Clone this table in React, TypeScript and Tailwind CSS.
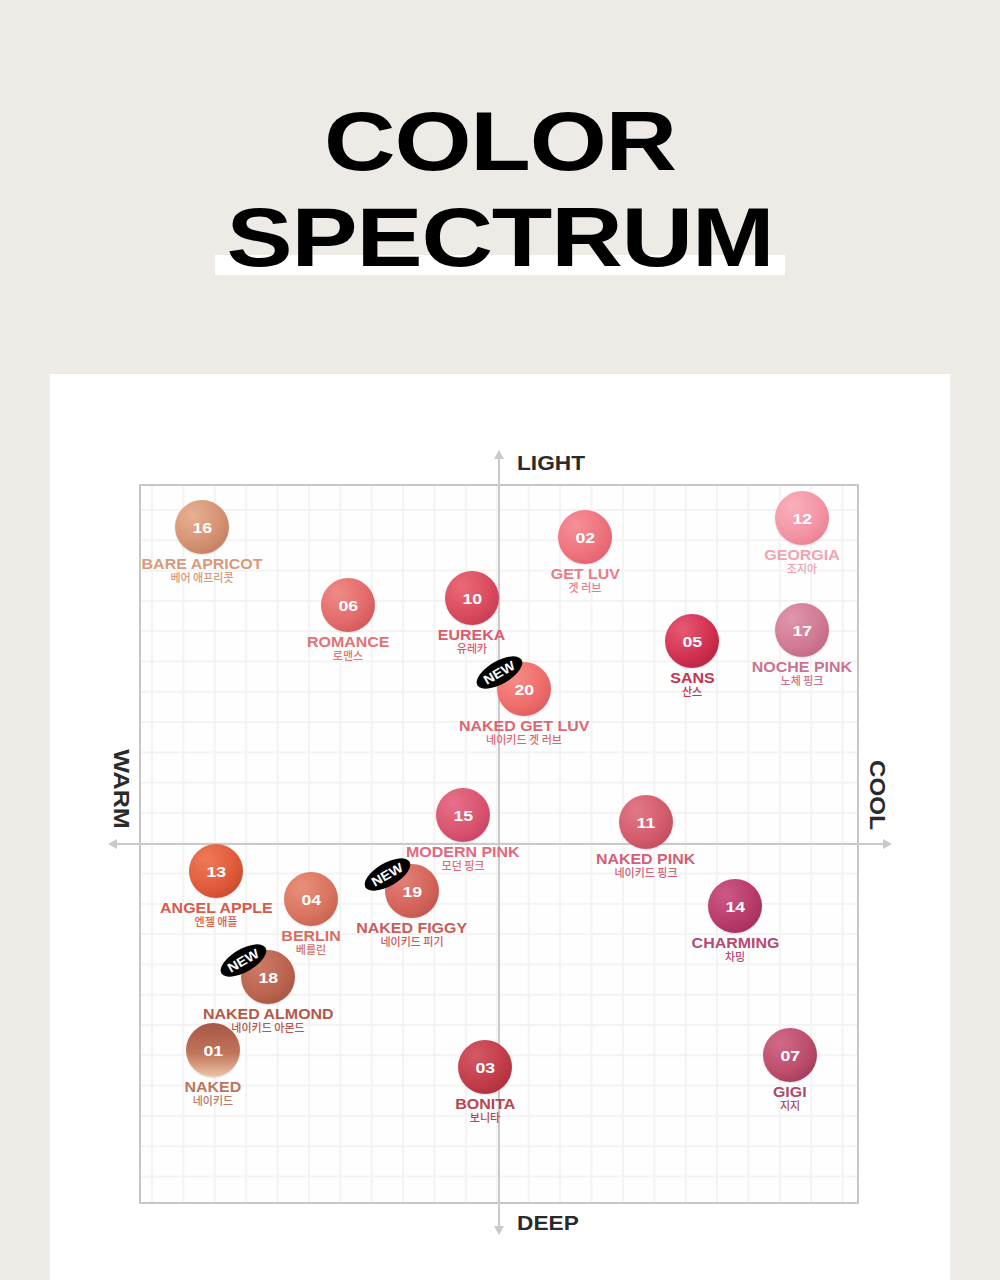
type Shade = {
  no: string
  en: string
  ko: string
  x: number
  y: number
  light: string
  base: string
  dark: string
  label: string
  isNew?: boolean
}

// x / y are circle centres measured from the chart frame's top-left corner
const shades: Shade[] = [
  { no: '16', en: 'BARE APRICOT', ko: '베어 애프리콧', x: 63, y: 43, light: '#e8b094', base: '#d49172', dark: '#b97257', label: '#d9997b' },
  { no: '06', en: 'ROMANCE', ko: '로맨스', x: 209, y: 121, light: '#f08a84', base: '#e36a6a', dark: '#c24a50', label: '#e07474' },
  { no: '10', en: 'EUREKA', ko: '유레카', x: 333, y: 114, light: '#ea6a78', base: '#da4a5e', dark: '#b8344a', label: '#dd5a6e' },
  { no: '02', en: 'GET LUV', ko: '겟 러브', x: 446, y: 53, light: '#f6909a', base: '#ee717b', dark: '#d8586a', label: '#ec7c88' },
  { no: '12', en: 'GEORGIA', ko: '조지아', x: 663, y: 34, light: '#f9b0bc', base: '#f394a4', dark: '#de7488', label: '#f0a3b3' },
  { no: '05', en: 'SANS', ko: '산스', x: 553, y: 157, light: '#e85a74', base: '#d03050', dark: '#a81c3a', label: '#c8304f' },
  { no: '17', en: 'NOCHE PINK', ko: '노체 핑크', x: 663, y: 146, light: '#e096aa', base: '#d07993', dark: '#b85e7a', label: '#c9738c' },
  { no: '20', en: 'NAKED GET LUV', ko: '네이키드 겟 러브', x: 385, y: 205, light: '#f88c88', base: '#ee6d6b', dark: '#d05256', label: '#dd6670', isNew: true },
  { no: '15', en: 'MODERN PINK', ko: '모던 핑크', x: 324, y: 331, light: '#e8708a', base: '#d9536f', dark: '#bb3e5a', label: '#e06a80' },
  { no: '11', en: 'NAKED PINK', ko: '네이키드 핑크', x: 507, y: 338, light: '#e27886', base: '#d35b6c', dark: '#b44456', label: '#d25f75' },
  { no: '13', en: 'ANGEL APPLE', ko: '엔젤 애플', x: 77, y: 387, light: '#ee7a5a', base: '#e05a3a', dark: '#b8402a', label: '#d85a4a' },
  { no: '04', en: 'BERLIN', ko: '베를린', x: 172, y: 415, light: '#e8907a', base: '#d9735e', dark: '#b85846', label: '#d47060' },
  { no: '19', en: 'NAKED FIGGY', ko: '네이키드 피기', x: 273, y: 407, light: '#e2807a', base: '#d4645a', dark: '#b44c46', label: '#c85c58', isNew: true },
  { no: '14', en: 'CHARMING', ko: '차밍', x: 596, y: 422, light: '#cc5a86', base: '#b73a6a', dark: '#962a54', label: '#b84872' },
  { no: '18', en: 'NAKED ALMOND', ko: '네이키드 아몬드', x: 129, y: 493, light: '#cc7a66', base: '#bb6450', dark: '#9c4c3e', label: '#b4584c', isNew: true },
  { no: '01', en: 'NAKED', ko: '네이키드', x: 74, y: 566, light: '#a85848', base: '#bf735a', dark: '#ecc4a4', label: '#ba7660' },
  { no: '03', en: 'BONITA', ko: '보니타', x: 346, y: 583, light: '#d45a66', base: '#c23c48', dark: '#9a2834', label: '#b84450' },
  { no: '07', en: 'GIGI', ko: '지지', x: 651, y: 571, light: '#d06a88', base: '#bc4d6c', dark: '#8e3050', label: '#aa4c68' },
]

function swatchBackground(s: Shade) {
  if (s.no === '01') {
    return `linear-gradient(to bottom, ${s.light} 0%, ${s.base} 55%, ${s.dark} 100%)`
  }
  return `radial-gradient(circle at 32% 28%, ${s.light} 0%, ${s.base} 55%, ${s.dark} 100%)`
}

function NewBadge() {
  return (
    <div className="absolute left-[-23px] top-[-1px] flex h-[23px] w-[51px] -rotate-[30deg] items-center justify-center rounded-[50%] bg-black">
      <span className="scale-x-[1.12] text-[13px] font-bold leading-none text-white">NEW</span>
    </div>
  )
}

function Swatch({ s }: { s: Shade }) {
  return (
    <div
      className="absolute flex w-[170px] -translate-x-1/2 flex-col items-center"
      style={{ left: s.x - 2, top: s.y - 29 }}
    >
      <div
        className="relative flex h-[54px] w-[54px] items-center justify-center rounded-full shadow-[0_1px_2px_rgba(0,0,0,0.12)]"
        style={{ background: swatchBackground(s) }}
      >
        <span className="scale-x-[1.18] text-[15px] font-bold leading-none text-white">{s.no}</span>
        {s.isNew && <NewBadge />}
      </div>
      <div
        className="mt-[3px] scale-x-[1.14] whitespace-nowrap text-[14px] font-bold leading-[14px]"
        style={{ color: s.label }}
      >
        {s.en}
      </div>
      <div
        className="whitespace-nowrap font-['Noto_Sans_CJK_KR',sans-serif] text-[11px] font-medium leading-[12px]"
        style={{ color: s.label }}
      >
        {s.ko}
      </div>
    </div>
  )
}

function Axes() {
  return (
    <svg className="pointer-events-none absolute left-[-42px] top-[-42px]" width="800" height="800" viewBox="0 0 800 800">
      <g fill="#cacaca" stroke="none">
        <rect x="399" y="12" width="2" height="772" />
        <rect x="14" y="399" width="772" height="2" />
        <polygon points="400,6 395,15 405,15" />
        <polygon points="400,791 395,782 405,782" />
        <polygon points="9,400 18,395 18,405" />
        <polygon points="793,400 784,395 784,405" />
      </g>
    </svg>
  )
}

export default function App() {
  return (
    <div className="h-[1280px] overflow-hidden bg-[#eeebe6] font-['Liberation_Sans',Arial,sans-serif] text-black">
      <header className="h-[374px] pt-[93px] text-center">
        <div className="scale-x-[1.18] text-[84px] font-bold leading-[96px] tracking-[-1px]">COLOR</div>
        <div className="mx-auto w-[570px] bg-[linear-gradient(to_bottom,transparent_66px,#ffffff_66px,#ffffff_86px,transparent_86px)]">
          <div className="scale-x-[1.18] text-[84px] font-bold leading-[96px] tracking-[-1px]">SPECTRUM</div>
        </div>
      </header>

      <section className="mx-[50px] h-[906px] bg-white pl-[89px] pt-[110px]">
        <div className="relative h-[720px] w-[720px] border-2 border-[#c6c6c6] bg-[#fefefe] bg-[linear-gradient(to_right,#f3f3f3_2px,transparent_2px),linear-gradient(to_bottom,#f3f3f3_2px,transparent_2px)] bg-size-[31.4px_30.3px] bg-position-[10px_23px]">
          <Axes />

          <div className="absolute left-[376px] top-[-34px] origin-left scale-x-[1.08] text-[21px] font-bold leading-[22px] text-[#2a2a2a]">
            LIGHT
          </div>
          <div className="absolute left-[376px] top-[726px] origin-left scale-x-[1.08] text-[21px] font-bold leading-[22px] text-[#2a2a2a]">
            DEEP
          </div>
          <div className="absolute left-[-20px] top-[303px] -translate-x-1/2 -translate-y-1/2 rotate-90 scale-x-[1.14] text-[22px] font-bold leading-[22px] text-[#2a2a2a]">
            WARM
          </div>
          <div className="absolute left-[736px] top-[309px] -translate-x-1/2 -translate-y-1/2 rotate-90 scale-x-[1.1] text-[22px] font-bold leading-[22px] text-[#2a2a2a]">
            COOL
          </div>

          {shades.map((s) => (
            <Swatch key={s.no} s={s} />
          ))}
        </div>
      </section>
    </div>
  )
}
